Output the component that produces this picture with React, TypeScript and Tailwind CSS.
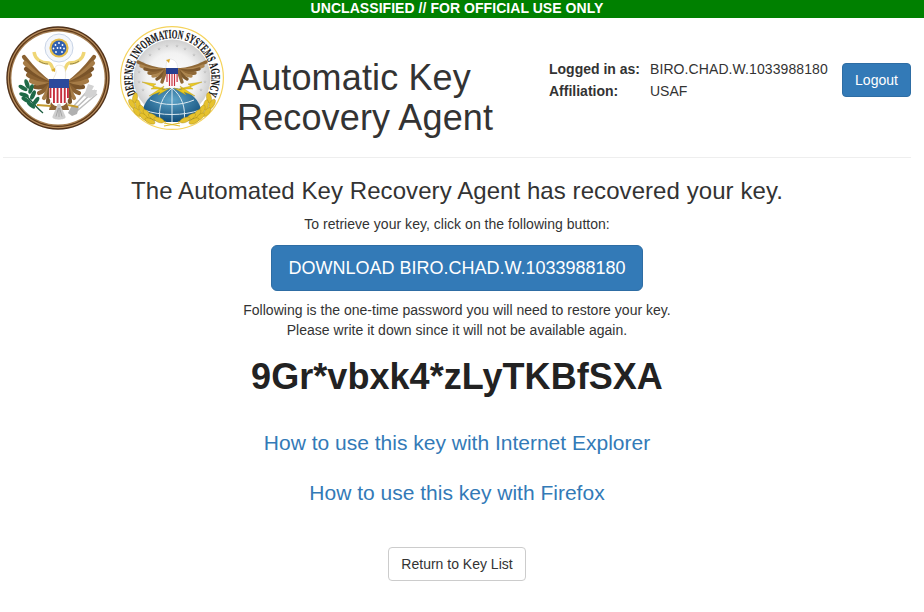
const A = '"Liberation Sans", Arial, sans-serif';

function Feathers({ base, tips, width, colors }: { base: [number, number]; tips: [number, number][]; width: number; colors: string[] }) {
  return (
    <g>
      {tips.map(([x, y], i) => (
        <path
          key={i}
          d={`M${base[0]} ${base[1]} Q${(base[0] + x) / 2 - 1} ${(base[1] + y) / 2 + 3} ${x} ${y}`}
          stroke={colors[i % colors.length]}
          strokeWidth={width}
          strokeLinecap="round"
          fill="none"
        />
      ))}
    </g>
  );
}

const mirror = (cx: number) => `translate(${cx * 2} 0) scale(-1 1)`;

function GreatSeal() {
  const tips: [number, number][] = [[18, 31], [19, 37], [20, 43], [22, 49], [25, 55], [29, 61], [33, 67], [38, 72], [42, 76]];
  const brown = ["#8b6232", "#a67c47", "#7a5429"];
  const olive = [[21, 58, -20], [17, 62, -60], [25, 63, 20], [18, 69, -70], [27, 69, 25], [20, 74, -60], [30, 75, 35], [25, 79, -50]];
  return (
    <svg width="104" height="104" viewBox="0 0 104 104" className="shrink-0">
      <circle cx="52" cy="52" r="51.7" fill="#4f3018" />
      <circle cx="52" cy="52" r="50.3" fill="#b58b5c" />
      <circle cx="52" cy="52" r="49" fill="#5d3818" />
      <circle cx="52" cy="52" r="47.8" fill="#a67f52" />
      <circle cx="52" cy="52" r="46.6" fill="#fff" />
      <circle cx="53" cy="22" r="14" fill="#f3f6fb" stroke="#c8d4e6" strokeWidth="1" />
      <circle cx="53" cy="22" r="9.6" fill="#e4bd4a" />
      <circle cx="53" cy="22" r="7.4" fill="#2f5fb0" />
      {[[53, 17], [49.5, 19], [56.5, 19], [47.5, 22.5], [51.5, 22], [54.5, 22], [58, 22.5], [50, 26], [56, 26]].map(([x, y], i) => (
        <circle key={i} cx={x} cy={y} r="0.9" fill="#fff" />
      ))}
      <Feathers base={[45, 58]} tips={tips} width={4.2} colors={brown} />
      <g transform={mirror(53)}>
        <Feathers base={[45, 58]} tips={tips} width={4.2} colors={brown} />
      </g>
      <path d="M28 26 C29 33 35 37 43 37 C46 38 46 42 48 45" stroke="#efd675" strokeWidth="3.4" fill="none" />
      <path d="M78 26 C77 33 71 37 63 37 C60 38 60 42 58 45" stroke="#efd675" strokeWidth="3.4" fill="none" />
      <path d="M33 35 C36 37 39 38 42 38 M73 35 C70 37 67 38 64 38" stroke="#6f6233" strokeWidth=".7" fill="none" />
      <path d="M49 42 C49 39 55 38 58 41 C60 44 60 50 59 54 L47 54 C48 50 51 47 50 45Z" fill="#fff" stroke="#d5d0c2" strokeWidth=".5" />
      <path d="M49 42 L45 44 L49 46Z" fill="#d9ab2e" />
      <path d="M45 76 C48 82 58 82 61 76 L63 84 L43 84Z" fill="#8b6232" />
      {[-24, -16, -8, 0, 8, 16, 24].map((a) => (
        <path key={a} d="M53 80 V92" stroke="#cfcfcf" strokeWidth="3.4" strokeLinecap="round" transform={`rotate(${a} 53 80)`} />
      ))}
      {[-16, 0, 16].map((a) => (
        <path key={a} d="M53 82 V91" stroke="#8f8f8f" strokeWidth=".6" transform={`rotate(${a} 53 80)`} />
      ))}
      <rect x="43" y="53" width="20" height="9" fill="#2c4a9c" />
      <path d="M43 62 H63 V71 C63 75 57 77 53 78 C49 77 43 75 43 71Z" fill="#fff" />
      {[43.5, 47, 50.6, 54.2, 57.8, 61].map((x) => (
        <rect key={x} x={x} y="62" width="1.9" height={x < 45 || x > 60 ? 10 : 15} fill="#c62f3d" />
      ))}
      <path d="M19 68 C24 74 30 81 37 87" stroke="#1b5c3f" strokeWidth="1.3" fill="none" />
      {olive.map(([x, y, r], i) => (
        <ellipse key={i} cx={x} cy={y} rx="2.1" ry="5" fill="#1f6a47" transform={`rotate(${r} ${x} ${y})`} />
      ))}
      <path d="M31 79 L45 80" stroke="#c49a2e" strokeWidth="2" />
      <path d="M66 82 L86 60 M68 84 L89 64 M71 85 L91 68" stroke="#bdbdbd" strokeWidth="1.5" />
      <path d="M82 58 L88 60 L86 64 L91 64 L90 69 L84 72 L78 70Z" fill="#d2d2d2" />
      <path d="M66 79 L73 81 L71 88 L66 90 L62 87Z" fill="#b0b0b0" />
      <path d="M62 79 L72 81" stroke="#c49a2e" strokeWidth="2" />
    </svg>
  );
}

function Star({ x, y }: { x: number; y: number }) {
  return (
    <path
      transform={`translate(${x} ${y}) scale(2)`}
      d="M0 -1 L.29 -.31 L.95 -.31 L.42 .12 L.59 .81 L0 .41 L-.59 .81 L-.42 .12 L-.95 -.31 L-.29 -.31Z"
      fill="#c4c4c4"
    />
  );
}

function Laurel() {
  const leaves = [[15, 72, 10], [18, 79, -10], [22, 84, -25], [27, 88, -40], [33, 91, -55], [39, 94, -70], [12, 78, -30], [17, 86, -40], [24, 91, -50], [30, 95, -65]];
  return (
    <g>
      <path d="M15 70 C18 82 30 92 46 96" stroke="#b8941c" strokeWidth="1" fill="none" />
      {leaves.map(([x, y, r], i) => (
        <ellipse key={i} cx={x} cy={y} rx="2.4" ry="5.4" fill="#e6c22e" stroke="#a98a17" strokeWidth=".4" transform={`rotate(${r} ${x} ${y})`} />
      ))}
    </g>
  );
}

function DisaSeal() {
  const stars = [[30, 29], [39, 23], [47, 20], [57, 20], [65, 23], [74, 29], [23, 37], [81, 37], [19, 46], [85, 46], [19, 56], [85, 56], [23, 64], [81, 64]];
  const tips: [number, number][] = [[18, 36], [21, 40], [25, 43], [29, 47], [33, 50], [37, 53], [42, 56]];
  const brown = ["#8f6836", "#ad8650", "#7d592c"];
  return (
    <svg width="104" height="104" viewBox="0 0 104 104" className="shrink-0">
      <defs>
        <radialGradient id="bg" cx="50%" cy="50%" r="50%">
          <stop offset="0%" stopColor="#ffffff" />
          <stop offset="65%" stopColor="#f2f2f2" />
          <stop offset="100%" stopColor="#cfcfcf" />
        </radialGradient>
        <radialGradient id="globe" cx="50%" cy="35%" r="65%">
          <stop offset="0%" stopColor="#5fa6ca" />
          <stop offset="100%" stopColor="#0f4b78" />
        </radialGradient>
        <path id="arc" d="M16 68 A39.5 39.5 0 1 1 88 68" fill="none" />
      </defs>
      <circle cx="52" cy="52" r="51.4" fill="#fff" stroke="#f5d35c" strokeWidth="1.2" />
      <circle cx="52" cy="52" r="38.5" fill="url(#bg)" />
      <text fontFamily='"Liberation Serif", serif' fontWeight="700" fontSize="12.5" fill="#111" stroke="#111" strokeWidth=".2">
        <textPath href="#arc" textLength="158" lengthAdjust="spacingAndGlyphs">DEFENSE INFORMATION SYSTEMS AGENCY</textPath>
      </text>
      {stars.map(([x, y], i) => (
        <Star key={i} x={x} y={y} />
      ))}
      <path d="M22 90 C22 74 36 62 52 62 C68 62 82 74 82 90 C70 98 34 98 22 90Z" fill="url(#globe)" />
      <path d="M30 74 C44 80 60 80 74 74 M24 84 C40 90 64 90 80 84 M52 62 V96 M52 62 C42 70 38 82 40 95 M52 62 C62 70 66 82 64 95" stroke="#dbe9f0" strokeWidth="1" fill="none" />
      <path d="M22 56 L36 58 L33 60 L45 63 L31 63 L34 61Z M29 70 L44 60 L42 64 L50 62 L38 69 L40 66Z" fill="#ecca1f" stroke="#b39512" strokeWidth=".4" />
      <g transform={mirror(52)}>
        <path d="M22 56 L36 58 L33 60 L45 63 L31 63 L34 61Z M29 70 L44 60 L42 64 L50 62 L38 69 L40 66Z" fill="#ecca1f" stroke="#b39512" strokeWidth=".4" />
      </g>
      <Feathers base={[46, 44]} tips={tips} width={3.4} colors={brown} />
      <g transform={mirror(52)}>
        <Feathers base={[46, 44]} tips={tips} width={3.4} colors={brown} />
      </g>
      <path d="M46 42 C46 37 47 33 50 33 C53 33 56 35 57 38 L58 44 L46 44Z" fill="#fff" stroke="#cfcfcf" strokeWidth=".4" />
      <path d="M46 34 L50 33 L49 37Z" fill="#dca92c" />
      <rect x="46" y="42" width="12" height="6" fill="#27408f" />
      <path d="M46 48 H58 V55 C58 58 54 60 52 61 C50 60 46 58 46 55Z" fill="#fff" />
      {[46.4, 48.9, 51.4, 53.9, 56.5].map((x) => (
        <rect key={x} x={x} y="48" width="1.2" height={x < 47 || x > 56 ? 8 : 12} fill="#c62f3d" />
      ))}
      <Laurel />
      <g transform={mirror(52)}>
        <Laurel />
      </g>
      <path d="M44 97 L60 100 M60 97 L44 100" stroke="#dcb92a" strokeWidth="1.2" />
    </svg>
  );
}

export default function App() {
  return (
    <div className="w-[924px] h-[612px] overflow-hidden bg-white text-[14px] text-[#333] leading-[20px]" style={{ fontFamily: A }}>
      <div className="h-[18px] bg-[#008000]">
        <div className="w-[914px] text-white text-center font-bold leading-[16px] tracking-[0.05px]">UNCLASSIFIED // FOR OFFICIAL USE ONLY</div>
      </div>
      <div className="w-[914px]">
        <div className="flex ml-[3px] w-[908px] h-[140px] border-b border-[#eee]">
          <div className="flex gap-[10px] pl-[3px] pt-[8px]">
            <GreatSeal />
            <DisaSeal />
          </div>
          <h1 className="ml-[13px] mt-[40px] w-[290px] text-[36px] leading-[39.6px] font-normal tracking-[0.14px]">Automatic Key Recovery Agent</h1>
          <div className="ml-[22px] mt-[40px] flex-1 flex items-start">
            <div className="grid grid-cols-[101px_auto] auto-rows-[22px] leading-[22px]">
              <b>Logged in as:</b>
              <span className="tracking-[0.09px]">BIRO.CHAD.W.1033988180</span>
              <b>Affiliation:</b>
              <span>USAF</span>
            </div>
            <button className="ml-auto mt-[5px] h-[34px] w-[69px] rounded-[4px] bg-[#337ab7] border border-[#2e6da4] text-white">Logout</button>
          </div>
        </div>
        <div className="flex flex-col items-center">
          <h2 className="mt-[20px] text-[24px] leading-[26.4px] font-normal tracking-[0.07px]">The Automated Key Recovery Agent has recovered your key.</h2>
          <p className="mt-[10px] tracking-[0.03px]">To retrieve your key, click on the following button:</p>
          <button className="mt-[11px] h-[46px] w-[372px] rounded-[6px] bg-[#337ab7] border border-[#2e6da4] text-white text-[18px]">DOWNLOAD BIRO.CHAD.W.1033988180</button>
          <p className="mt-[9px] text-center tracking-[0.02px]">Following is the one-time password you will need to restore your key.<br />Please write it down since it will not be available again.</p>
          <div className="mt-[12px] text-[36px] leading-[50px] font-bold text-[#222] tracking-[0.05px]">9Gr*vbxk4*zLyTKBfSXA</div>
          <a className="mt-[30px] text-[21px] leading-[22px] text-[#337ab7]">How to use this key with Internet Explorer</a>
          <a className="mt-[28px] text-[21px] leading-[22px] text-[#337ab7]">How to use this key with Firefox</a>
          <button className="mt-[43px] h-[34px] w-[138px] rounded-[4px] bg-white border border-[#ccc] text-[#333]">Return to Key List</button>
        </div>
      </div>
    </div>
  );
}
